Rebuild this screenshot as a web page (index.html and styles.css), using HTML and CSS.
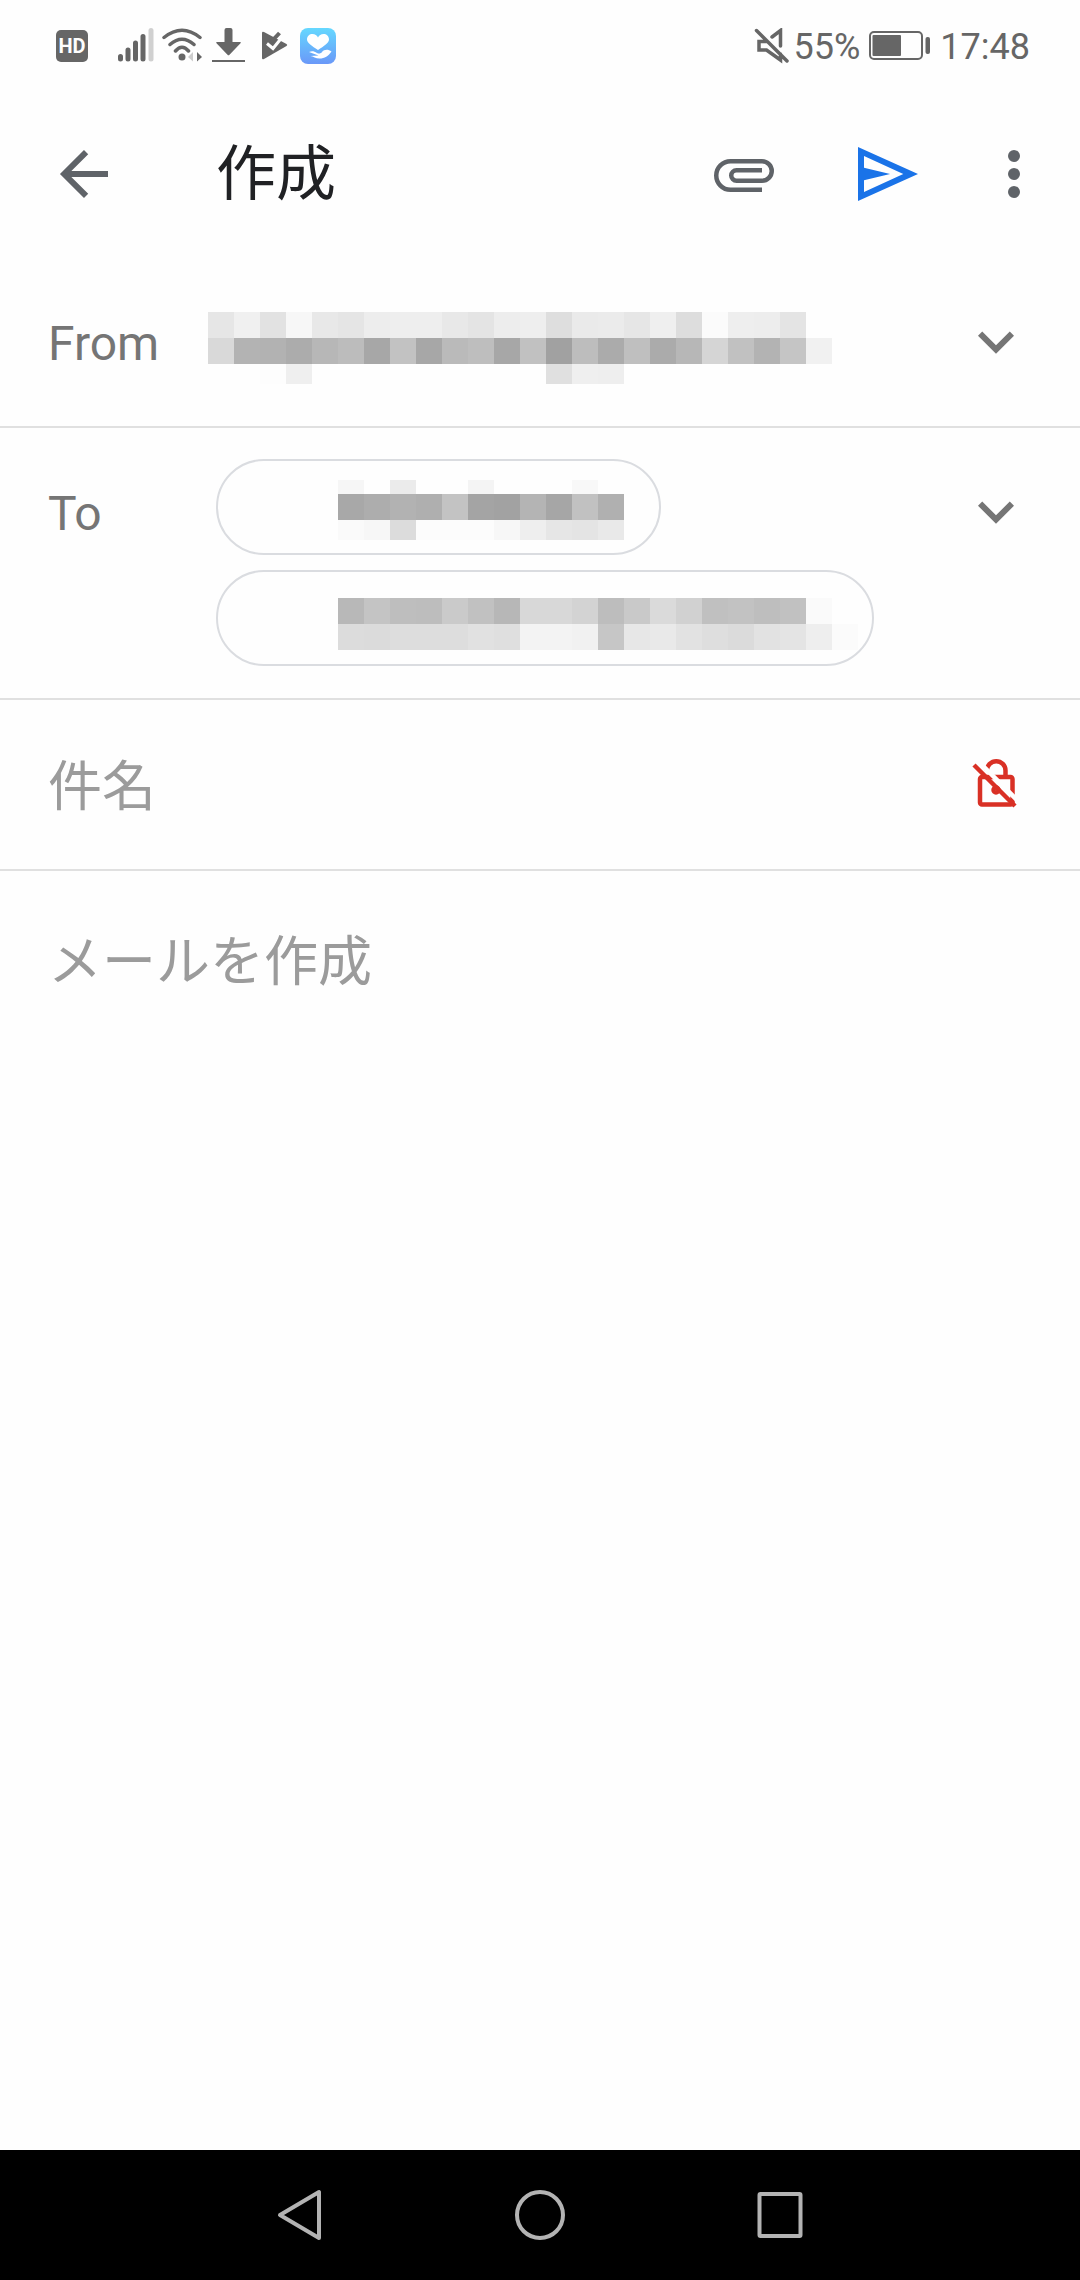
FILE: index.html
```
<!DOCTYPE html>
<html lang="ja">
<head>
    <meta charset="UTF-8">
    <meta name="viewport" content="width=device-width, initial-scale=1.0">
    <title>作成</title>
    <link rel="stylesheet" href="styles.css">
</head>
<body>
    <div class="status-bar">
        <div class="status-left">
            <span class="hd">HD</span>
            <svg class="signal" width="36" height="36" viewBox="0 0 36 36">
                <path d="M2.5 28.5V31M10 22V31M17.5 15V31M25 8.500V31"/>
                <path class="signal-off" d="M33 2.500V31"/>
            </svg>
            <svg width="40" height="36" viewBox="0 0 40 36">
                <path class="line" d="M2 9.500Q20-5 38 9.500M8 16.500Q20 6 32 16.500M13.500 23Q20 15.500 26.500 23"/>
                <circle cx="20" cy="29" r="3.500"/>
                <path fill="#ccc" d="M31 24v9.500l-5-4.500z"/>
                <path d="M35 24v9.500l5-4.500z"/>
            </svg>
            <svg width="36" height="36" viewBox="0 0 36 36">
                <path d="M14.500 2q0-2 2-2h4q2 0 2 2v12H30q1.500 0 .5 1.200l-11 11.600q-1 1-2 0l-11-11.600q-1-1.200.5-1.200h7.500zM2 32h33v2H2z"/>
            </svg>
            <svg width="38" height="36" viewBox="0 0 38 36">
                <path d="M8 5q0-2 2-1l22.500 12q1.500 1 0 2L10 31q-2 1-2-1z"/>
                <path stroke="#666" stroke-width="4" fill="none" d="M17 14l8.500-9"/>
                <path stroke="#fefefe" stroke-width="3" fill="none" d="M13 15.500l6 5 10.500-13"/>
            </svg>
            <svg width="36" height="36" viewBox="0 0 36 36">
                <defs>
                    <linearGradient id="health" x1="0" y1="0" x2="0" y2="1">
                        <stop offset="0" stop-color="#65d8ff"/>
                        <stop offset="1" stop-color="#6a98f8"/>
                    </linearGradient>
                </defs>
                <rect width="36" height="36" rx="8" fill="url(#health)"/>
                <path fill="#fff" d="M18 22C12 18 7 15 7 11.500 7 8 9.500 6 12.500 6c2.500 0 4.500 1.200 5.500 3.500C19 7.200 21 6 23.500 6 26.500 6 29 8 29 11.500 29 15 24 18 18 22z"/>
                <path fill="#fff" d="M9 24c3-1.500 5-1 8 1 2 1 4 .5 5-1 2-2.500 6-3 9.500-.5-3 4.500-7 7-12 7-4 0-6-2-9-2.500l8-.5z"/>
            </svg>
        </div>
        <div class="status-right">
            <svg width="36" height="36" viewBox="0 0 36 36">
                <path class="line" d="M18 9l8.500-6.500V18M13 13.500H5v8.500h7.500l14 10v-6M2.500 2.500L33 33"/>
            </svg>
            <span class="percent">55%</span>
            <svg width="64" height="36" viewBox="0 0 64 36">
                <rect class="battery-case" x="2" y="4" width="52" height="27" rx="4"/>
                <rect x="4.500" y="7" width="28.500" height="21" rx="1"/>
                <rect x="57.500" y="9" width="4.500" height="17" rx="2"/>
            </svg>
            <span class="clock">17:48</span>
        </div>
    </div>

    <header class="app-bar">
        <button class="icon-button back" aria-label="戻る">
            <svg width="72" height="72" viewBox="0 0 24 24"><path class="back-arrow" d="M20 12H5.300M12.700 4.700L5.400 12l7.300 7.300"/></svg>
        </button>
        <h1 class="title">作成</h1>
        <button class="icon-button" aria-label="添付">
            <svg width="72" height="72" viewBox="0 0 24 24"><path class="clip" d="M18 17.250H7.500a4.750 4.750 0 0 1 0-9.500H18a3.250 3.250 0 0 1 0 6.500H9.500a1.750 1.750 0 0 1 0-3.500H18"/></svg>
        </button>
        <button class="icon-button send" aria-label="送信">
            <svg width="72" height="72" viewBox="0 0 24 24"><path fill-rule="evenodd" d="M2 3l20 9-20 9zM4 6v3.900l8.700 2.100L4 14.100V18l13.100-6z"/></svg>
        </button>
        <button class="icon-button more" aria-label="その他">
            <svg width="72" height="72" viewBox="0 0 24 24"><circle cx="12" cy="6" r="2"/><circle cx="12" cy="12" r="2"/><circle cx="12" cy="18" r="2"/></svg>
        </button>
    </header>

    <main class="compose">
        <div class="row">
            <span class="label">From</span>
            <div class="sender">
                <div class="mosaic" data-name="from"></div>
            </div>
            <button class="expand" aria-label="差出人を選択">
                <svg width="72" height="72" viewBox="0 0 24 24"><path d="M7.410 7.840L12 12.420l4.590-4.580L18 9.250l-6 6-6-6z"/></svg>
            </button>
        </div>
        <div class="row">
            <span class="label">To</span>
            <div class="chips">
                <div class="chip"><div class="mosaic" data-name="first"></div></div>
                <div class="chip chip-long"><div class="mosaic" data-name="second"></div></div>
            </div>
            <button class="expand" aria-label="Cc/Bccを追加">
                <svg width="72" height="72" viewBox="0 0 24 24"><path d="M7.410 7.840L12 12.420l4.590-4.580L18 9.250l-6 6-6-6z"/></svg>
            </button>
        </div>
        <div class="row subject-row">
            <input class="subject" type="text" placeholder="件名" aria-label="件名">
            <svg class="lock" width="72" height="72" viewBox="0 0 72 72">
                <rect x="20" y="28" width="32.500" height="27.500" rx="2"/>
                <path d="M27 21.500a9.200 9.200 0 0 1 18.500 0v6"/>
                <circle cx="36" cy="41" r="2.500"/>
                <path class="lock-gap" d="M18 12l42 42"/>
                <path d="M14 16l41 41"/>
            </svg>
        </div>
        <textarea class="message" placeholder="メールを作成" aria-label="メールを作成"></textarea>
    </main>

    <nav class="nav-bar">
        <button class="nav-button" aria-label="戻る">
            <svg width="56" height="56" viewBox="0 0 56 56"><path d="M47 5v46L8 28z"/></svg>
        </button>
        <button class="nav-button" aria-label="ホーム">
            <svg width="56" height="56" viewBox="0 0 56 56"><circle cx="28" cy="28" r="23"/></svg>
        </button>
        <button class="nav-button" aria-label="履歴">
            <svg width="56" height="56" viewBox="0 0 56 56"><rect x="7.500" y="7" width="41" height="42" rx="1"/></svg>
        </button>
    </nav>

    <script src="script.js"></script>
</body>
</html>
```

FILE: styles.css
```
* {
    box-sizing: border-box;
}

body {
    margin: 0;
    min-height: 100vh;
    display: flex;
    flex-direction: column;
    background-color: #fefefe;
    font-family: Roboto, "Noto Sans CJK JP", sans-serif;
}

button {
    padding: 0;
    border: 0;
    background: none;
    cursor: pointer;
}

svg {
    display: block;
    flex-shrink: 0;
}

/* Status bar */
.status-bar {
    display: flex;
    justify-content: space-between;
    height: 90px;
    padding: 2px 50px 0 56px;
    color: #666;
    fill: #666;
    font-size: 36px;
}

.status-left,
.status-right {
    display: flex;
    align-items: center;
}

.status-left {
    gap: 8px;
}

.hd {
    width: 32px;
    height: 32px;
    margin-right: 22px;
    border-radius: 5px;
    background-color: #666;
    color: #fefefe;
    font-size: 20px;
    font-weight: 700;
    line-height: 32px;
    text-align: center;
}

.line {
    fill: none;
    stroke: #666;
    stroke-width: 3.5;
    stroke-linecap: round;
}

.signal {
    stroke: #666;
    stroke-width: 5;
    stroke-linecap: round;
}

.signal-off {
    stroke: #d0d0d0;
}

.percent,
.clock {
    padding-top: 2px;
}

.percent {
    margin: 0 8px 0 4px;
}

.battery-case {
    fill: none;
    stroke: #666;
    stroke-width: 2;
}

.clock {
    margin-left: 8px;
}

/* App bar */
.app-bar {
    display: flex;
    align-items: center;
    height: 168px;
    padding: 0 12px;
    fill: #5f6368;
}

.icon-button {
    display: flex;
    justify-content: center;
    width: 144px;
}

.back,
.more {
    width: 108px;
}

.back {
    margin-left: 18px;
}

.back-arrow {
    fill: none;
    stroke: #5f6368;
    stroke-width: 2;
}

.clip {
    fill: none;
    stroke: #5f6368;
    stroke-width: 1.5;
}

.send {
    fill: #1a73e8;
}

.title {
    flex: 1;
    margin: 0;
    padding: 2px 0 0 78px;
    color: #202124;
    font-size: 60px;
    font-weight: 400;
    line-height: 72px;
}

/* Compose form */
.compose {
    flex: 1;
    display: flex;
    flex-direction: column;
}

.row {
    display: flex;
    align-items: flex-start;
    padding: 0 48px;
    border-bottom: 2px solid #e0e0e0;
}

.label {
    width: 168px;
    padding: 50px 0 46px;
    color: #757575;
    font-size: 48px;
    line-height: 72px;
}

.sender {
    flex: 1;
    padding-top: 54px;
    margin-left: -8px;
}

.expand {
    margin-top: 50px;
    fill: #757575;
}

.chips {
    flex: 1;
    display: flex;
    flex-direction: column;
    align-items: flex-start;
    gap: 15px;
    padding: 31px 0 32px;
}

.chip {
    height: 96px;
    padding: 19px 35px 0 120px;
    border: 2px solid #dadce0;
    border-radius: 48px;
}

.chip-long {
    padding: 26px 14px 0 120px;
}

.mosaic-line {
    display: flex;
    height: 26px;
}

.mosaic-line.short {
    height: 20px;
}

.mosaic-line.thin {
    height: 14px;
}

.mosaic-cell {
    width: 26px;
}

.subject-row {
    align-items: center;
    height: 171px;
}

.subject,
.message {
    flex: 1;
    min-width: 0;
    border: 0;
    outline: 0;
    background: none;
    font-family: "Noto Sans CJK JP", sans-serif;
    font-size: 54px;
    line-height: 72px;
}

.subject {
    padding: 0 0 4px;
}

.message {
    padding: 51px 48px;
    resize: none;
}

.subject::placeholder,
.message::placeholder {
    color: #9b9b9b;
}

.lock {
    fill: none;
    stroke: #d93025;
    stroke-width: 4.5;
}

.lock-gap {
    stroke: #fefefe;
}

/* Navigation bar */
.nav-bar {
    display: flex;
    justify-content: center;
    height: 130px;
    background-color: #000;
}

.nav-button {
    display: flex;
    align-items: center;
    justify-content: center;
    width: 240px;
    fill: none;
    stroke: #b3b3b3;
    stroke-width: 4;
    stroke-linejoin: round;
}
```

FILE: script.js
```
// Grey level of every block, two hex digits each
const mosaics = {
    from: [
        ['', 'e6 f0 e2 f7 e8 e5 ed ee ee e8 e4 ed ee de ea eb e6 ef dd fb ee ed e4 fe'],
        ['', 'd9 b3 b2 ac b7 bc a7 c2 a7 ba be a7 c1 a1 bd ab bf ab b7 d5 c1 b3 c5 f1'],
        ['short', 'fe fe fd ef fe fe fe fe fe fe fe fe fe e0 ef ee']
    ],
    first: [
        ['thin', 'f6 fe eb fe fe f4 fe fe fe f8 fe'],
        ['', 'a8 ad b2 af c3 a4 a2 b4 a6 c1 b0'],
        ['short', 'fa f7 dc fc fc fc f7 ee e6 e4 e9']
    ],
    second: [
        ['', 'b8 c4 be bd ca c1 b7 d8 d8 d3 bd c9 da d1 c0 c2 be c1 fa fe'],
        ['', 'dc db dd dd dd e1 df f3 f3 f1 c6 e7 e9 e2 de db e2 e4 ee fb']
    ]
};

document.querySelectorAll('.mosaic').forEach(mosaic => {
    mosaics[mosaic.dataset.name].forEach(([size, levels]) => {
        const line = document.createElement('div');
        line.className = `mosaic-line ${size}`;
        levels.split(' ').forEach(level => {
            const cell = document.createElement('span');
            cell.className = 'mosaic-cell';
            cell.style.backgroundColor = `#${level}${level}${level}`;
            line.appendChild(cell);
        });
        mosaic.appendChild(line);
    });
});
```
